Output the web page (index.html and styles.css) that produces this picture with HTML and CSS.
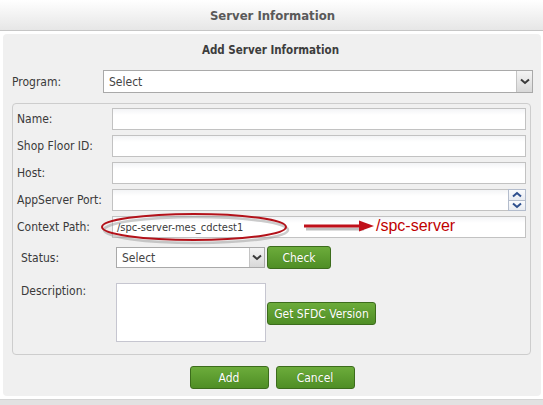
FILE: index.html
```html
<!DOCTYPE html>
<html>
<head>
<meta charset="utf-8">
<link rel="stylesheet" href="styles.css">
</head>
<body>
<div class="header"><span class="title">Server Information</span></div>
<div class="panel">
  <div class="subtitle">Add Server Information</div>
  <div class="program-row">
    <label class="lbl prog-lbl">Program:</label>
    <div class="select wide">
      <span class="sel-text">Select</span>
      <span class="sel-arrow"><svg width="10" height="7" viewBox="0 0 10 7"><path d="M1 1.5 L5 5 L9 1.5" fill="none" stroke="#3a3a3a" stroke-width="2"/></svg></span>
    </div>
  </div>
  <div class="fieldset">
    <div class="row"><label class="lbl">Name:</label><div class="input"></div></div>
    <div class="row"><label class="lbl">Shop Floor ID:</label><div class="input"></div></div>
    <div class="row"><label class="lbl">Host:</label><div class="input"></div></div>
    <div class="row"><label class="lbl">AppServer Port:</label>
      <div class="input spin-input">
        <span class="spinner">
          <span class="spin-btn"><svg width="10" height="7" viewBox="0 0 10 7"><path d="M1 5.5 L5 2 L9 5.5" fill="none" stroke="#2d4f8e" stroke-width="2"/></svg></span>
          <span class="spin-btn"><svg width="10" height="7" viewBox="0 0 10 7"><path d="M1 1.5 L5 5 L9 1.5" fill="none" stroke="#2d4f8e" stroke-width="2"/></svg></span>
        </span>
      </div>
    </div>
    <div class="row ctx-row"><label class="lbl">Context Path:</label>
      <div class="input"><span class="val">/spc-server-mes_cdctest1</span></div>
      <svg class="ellipse" width="192" height="34" viewBox="0 0 192 34">
        <ellipse cx="96" cy="18" rx="92" ry="13" fill="none" stroke="#9a9a9a" stroke-opacity="0.5" stroke-width="2.5"/>
        <ellipse cx="94" cy="15" rx="92" ry="13" fill="none" stroke="#b3121a" stroke-width="2"/>
      </svg>
      <svg class="arrow" width="76" height="16" viewBox="0 0 76 16">
        <path d="M2 10 H60" stroke="#8a8a8a" stroke-opacity="0.55" stroke-width="3"/>
        <path d="M0 7 H58" stroke="#c0101a" stroke-width="3"/>
        <path d="M55 1.5 L70 7 L55 12.5 Z" fill="#c0101a"/>
      </svg>
      <span class="annot">/spc-server</span>
    </div>
    <div class="row sub-row status-row"><label class="lbl">Status:</label>
      <div class="select small">
        <span class="sel-text">Select</span>
        <span class="sel-arrow"><svg width="10" height="7" viewBox="0 0 10 7"><path d="M1 1.5 L5 5 L9 1.5" fill="none" stroke="#3a3a3a" stroke-width="2"/></svg></span>
      </div>
      <button class="btn check">Check</button>
    </div>
    <div class="row sub-row desc-row"><label class="lbl">Description:</label>
      <div class="textarea"></div>
      <button class="btn sfdc">Get SFDC Version</button>
    </div>
  </div>
  <div class="actions">
    <button class="btn action">Add</button>
    <button class="btn action">Cancel</button>
  </div>
</div>
<div class="bottom-bar"></div>
</body>
</html>
```
FILE: styles.css
```css
* { box-sizing: border-box; }
html, body { margin: 0; padding: 0; }
body {
  width: 543px;
  height: 405px;
  overflow: hidden;
  background: #fff;
  font-family: "DejaVu Sans Condensed", "DejaVu Sans", sans-serif;
  font-stretch: condensed;
  font-size: 12px;
  color: #3a3a3a;
}
.header {
  height: 31px;
  background: linear-gradient(#ffffff, #e6e6e6);
  border-bottom: 1px solid #c6c6c6;
  display: flex;
  align-items: center;
  justify-content: center;
}
.title {
  font-size: 13px;
  font-weight: bold;
  color: #5a5a5a;
  margin-left: 2px;
}
.panel {
  margin: 3px 2px 0 3px;
  height: 362px;
  background: #f0f0f0;
  border-radius: 4px;
  padding: 8px 10px 0 9px;
}
.subtitle {
  text-align: center;
  font-weight: bold;
  font-size: 11.5px;
  line-height: 16px;
  color: #3d3d3d;
  margin-left: -2px;
}
.program-row {
  display: flex;
  align-items: center;
  margin-top: 12px;
  margin-right: -2px;
}
.lbl { display: block; }
.prog-lbl { width: 91px; flex: none; }
.select {
  height: 22px;
  border: 1px solid #a9a9a9;
  background: #fff;
  display: flex;
  align-items: center;
  color: #444;
}
.select.wide { flex: 1; height: 23px; }
.sel-text { flex: 1; padding-left: 5px; }
.sel-arrow {
  width: 16px;
  align-self: stretch;
  background: linear-gradient(#f4f4f4, #d8d8d8);
  border-left: 1px solid #c4c4c4;
  display: flex;
  align-items: center;
  justify-content: center;
}
.fieldset {
  margin-top: 10px;
  height: 252px;
  border: 1px solid #cdcdcd;
  border-radius: 4px;
  padding: 4px 4px 0 4px;
  display: flex;
  flex-direction: column;
  gap: 5px;
}
.row {
  display: flex;
  align-items: center;
  position: relative;
}
.row > .lbl { width: 95px; flex: none; }
.input {
  flex: 1;
  height: 22px;
  background: linear-gradient(#f3f4f6, #ffffff 6px);
  border: 1px solid #c2c2c2;
  display: flex;
  align-items: center;
  position: relative;
}
.input .val { padding-left: 4px; color: #3a3a3a; font-size: 11px; }
.spinner {
  position: absolute;
  right: -1px;
  top: -1px;
  bottom: -1px;
  width: 18px;
  display: flex;
  flex-direction: column;
}
.spin-btn {
  flex: 1;
  border: 1px solid #b3bccc;
  background: linear-gradient(#fafbfd, #e8ebf1);
  display: flex;
  align-items: center;
  justify-content: center;
}
.spin-btn + .spin-btn { border-top: none; }
.ellipse { position: absolute; left: 83px; top: -4px; }
.arrow { position: absolute; left: 287px; top: 3px; }
.annot {
  position: absolute;
  left: 359px;
  top: 1px;
  font-family: "Liberation Sans", Arial, sans-serif;
  font-stretch: normal;
  font-size: 16px;
  color: #c00000;
}
.sub-row { padding-left: 4px; }
.status-row { margin-top: 3px; }
.status-row .select { width: 149px; height: 21px; }
.status-row .sel-arrow { width: 15px; }
.btn {
  font-family: inherit;
  font-stretch: condensed;
  font-size: 12px;
  color: #fff;
  background: linear-gradient(#6cac3b, #4f8e25);
  border: 1px solid #3c6c1c;
  border-radius: 3px;
  height: 23px;
  padding: 0;
  text-shadow: 0 0 1px rgba(40, 70, 10, 0.4);
}
.check { width: 64px; margin-left: 2px; }
.desc-row { align-items: flex-start; margin-top: 9px; }
.desc-row .lbl { margin-top: 1px; }
.textarea {
  width: 150px;
  height: 59px;
  background: #fff;
  border: 1px solid #c6c6d0;
}
.sfdc { width: 109px; margin-left: 1px; margin-top: 19px; }
.actions {
  display: flex;
  justify-content: center;
  gap: 7px;
  margin-top: 11px;
  margin-left: 1px;
}
.action { width: 79px; }
.bottom-bar {
  margin-top: 3px;
  height: 10px;
  background: #e2e2e2;
  border-top: 1px solid #d4d4d4;
}
```
